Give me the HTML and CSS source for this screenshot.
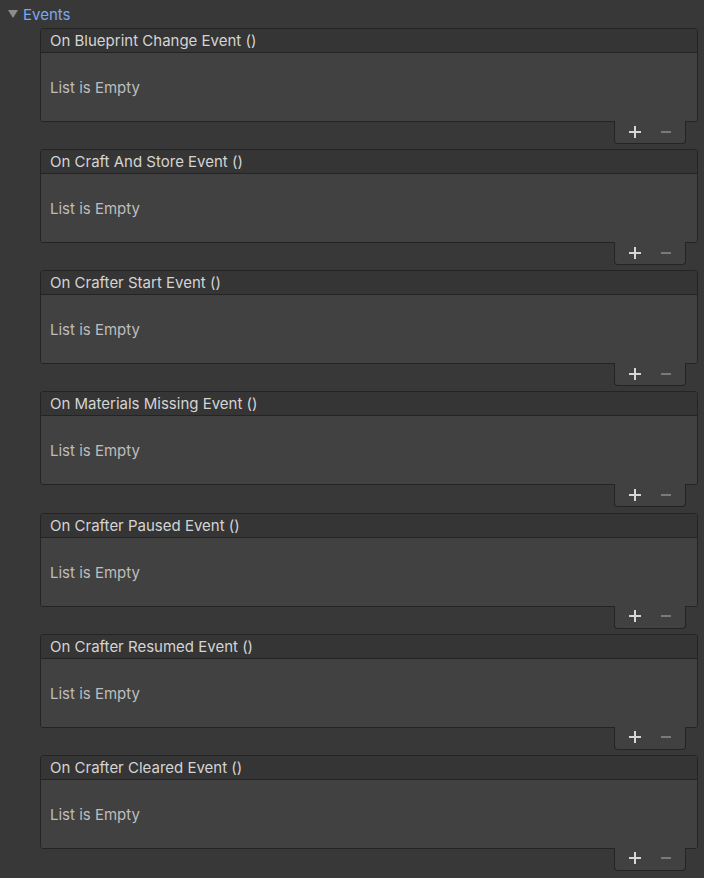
FILE: index.html
```html
<!DOCTYPE html>
<html lang="en">
<head>
  <meta charset="UTF-8">
  <title>Events</title>
  <link rel="stylesheet" href="styles.css">
</head>
<body>

  <!-- Foldout -->
  <div class="foldout">
    <span class="arrow"></span>
    <span class="foldout-label">Events</span>
  </div>

  <div class="event-list">
    <div class="event">
      <div class="event-box">
        <div class="event-head">On Blueprint Change Event ()</div>
        <div class="event-body">List is Empty</div>
      </div>
      <div class="event-foot"><span class="plus"></span><span class="minus"></span></div>
    </div>

    <div class="event">
      <div class="event-box">
        <div class="event-head">On Craft And Store Event ()</div>
        <div class="event-body">List is Empty</div>
      </div>
      <div class="event-foot"><span class="plus"></span><span class="minus"></span></div>
    </div>

    <div class="event">
      <div class="event-box">
        <div class="event-head">On Crafter Start Event ()</div>
        <div class="event-body">List is Empty</div>
      </div>
      <div class="event-foot"><span class="plus"></span><span class="minus"></span></div>
    </div>

    <div class="event">
      <div class="event-box">
        <div class="event-head">On Materials Missing Event ()</div>
        <div class="event-body">List is Empty</div>
      </div>
      <div class="event-foot"><span class="plus"></span><span class="minus"></span></div>
    </div>

    <div class="event">
      <div class="event-box">
        <div class="event-head">On Crafter Paused Event ()</div>
        <div class="event-body">List is Empty</div>
      </div>
      <div class="event-foot"><span class="plus"></span><span class="minus"></span></div>
    </div>

    <div class="event">
      <div class="event-box">
        <div class="event-head">On Crafter Resumed Event ()</div>
        <div class="event-body">List is Empty</div>
      </div>
      <div class="event-foot"><span class="plus"></span><span class="minus"></span></div>
    </div>

    <div class="event">
      <div class="event-box">
        <div class="event-head">On Crafter Cleared Event ()</div>
        <div class="event-body">List is Empty</div>
      </div>
      <div class="event-foot"><span class="plus"></span><span class="minus"></span></div>
    </div>
  </div>

</body>
</html>
```

FILE: styles.css
```css
html, body {
  margin: 0;
  padding: 0;
  background: #383838;
  font-family: Inter, "Noto Sans", sans-serif;
  font-size: 15px;
  color: #d2d2d2;
}

/* Foldout "Events" */
.foldout {
  display: flex;
  align-items: center;
  height: 20px;
  padding: 4px 0 4px 8px;
}

.arrow {
  width: 0;
  height: 0;
  border-left: 5px solid transparent;
  border-right: 5px solid transparent;
  border-top: 8px solid #8c8c8c;
  margin-right: 5px;
}

.foldout-label {
  color: #7aa9f0;
}

/* Event cards */
.event-list {
  display: flex;
  flex-direction: column;
  gap: 5.17px;
  padding-left: 40px;
  width: 658px;
}

.event {
  display: flex;
  flex-direction: column;
}

.event-box {
  border: 1px solid #242424;
  border-radius: 3px;
  overflow: hidden;
}

.event-head {
  height: 23px;
  line-height: 23px;
  padding-left: 9px;
  background: #353535;
  border-bottom: 1px solid #242424;
  color: #d4d4d4;
}

.event-body {
  height: 68px;
  line-height: 70px;
  padding-left: 9px;
  background: #414141;
  color: #bdbdbd;
}

.event-foot {
  box-sizing: border-box;
  align-self: flex-end;
  margin: -1px 12px 0 0;
  width: 72px;
  height: 23px;
  display: flex;
  align-items: center;
  gap: 20px;
  padding: 0 0 1px 14px;
  background: #414141;
  border: 1px solid #242424;
  border-top: none;
  border-radius: 0 0 4px 4px;
}

.plus {
  position: relative;
  width: 12px;
  height: 12px;
}

.plus::before,
.plus::after {
  content: "";
  position: absolute;
  background: #d6d6d6;
}

.plus::before {
  left: 0;
  top: 5px;
  width: 12px;
  height: 2px;
}

.plus::after {
  left: 5px;
  top: 0;
  width: 2px;
  height: 12px;
}

.minus {
  width: 10px;
  height: 2px;
  background: #7a7a7a;
}
```
